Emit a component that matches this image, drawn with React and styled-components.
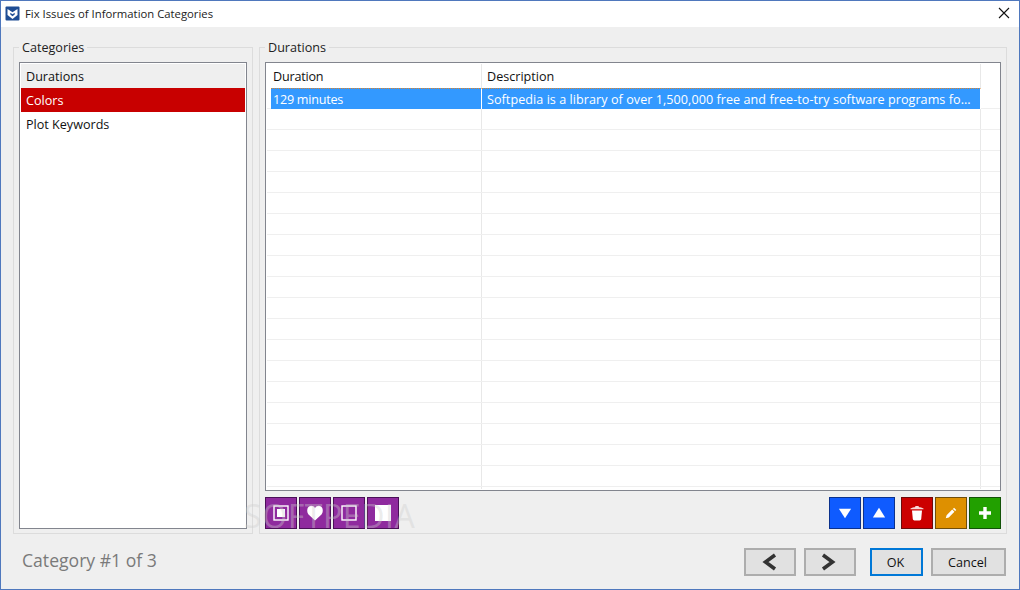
import React from "react";
import styled, { createGlobalStyle } from "styled-components";

const Global = createGlobalStyle`
  html, body { margin: 0; padding: 0; background: #efefef; }
  body { font-family: "Open Sans", "Noto Sans", "Liberation Sans", sans-serif; font-size: 12.6px; color: #111; }
  * { box-sizing: border-box; }
`;

const Win = styled.div`
  position: relative;
  width: 1020px;
  height: 590px;
  border: 1px solid #4f78bd;
  background: #efefef;
  display: flex;
  flex-direction: column;
  overflow: hidden;
`;

const TitleBar = styled.div`
  height: 26px;
  flex: none;
  background: #fff;
  display: flex;
  align-items: center;
  padding: 0 9px 2px 4px;
  gap: 5px;
`;

const TitleText = styled.div`
  flex: 1;
  font-size: 11.3px;
  color: #222;
`;

const Main = styled.div`
  flex: 1;
  display: flex;
  gap: 6px;
  padding: 11px 12px 0;
  min-height: 0;
`;

const Group = styled.fieldset`
  margin: 0;
  padding: 6px 5px 4px;
  border: 1px solid #dcdcdc;
  min-width: 0;
  width: ${(p) => p.$width}px;
  flex: none;
  display: flex;
  flex-direction: column;
  gap: 6px;
`;

const Legend = styled.legend`
  padding: 2px 3px 0;
  font-size: 12.6px;
  line-height: 16px;
  color: #222;
`;

const ListBox = styled.div`
  flex: 1;
  background: #fff;
  border: 1px solid #82858e;
  padding: 1px;
`;

const ListItem = styled.div`
  height: 24px;
  line-height: 26px;
  padding-left: 5px;
  background: ${(p) => (p.$selected ? "#c80000" : p.$hover ? "#efefef" : "transparent")};
  color: ${(p) => (p.$selected ? "#fff" : "#111")};
`;

const TableBox = styled.div`
  flex: 1;
  min-height: 0;
  background: #fff;
  border: 1px solid #82858e;
  padding: 1px 0 0 1px;
  overflow: hidden;
`;

const HeadRow = styled.div`
  display: flex;
  height: 24px;
`;

const Row = styled.div`
  display: flex;
  height: ${(p) => p.$height || 21}px;
  border-bottom: ${(p) => (p.$height ? "none" : "1px solid #efefef")};
`;

const Gutter = styled.div`
  width: 4px;
  flex: none;
`;

const Cell = styled.div`
  width: ${(p) => p.$width}px;
  flex: ${(p) => (p.$width ? "none" : "1")};
  padding-left: ${(p) => p.$pad}px;
  border-right: ${(p) => (p.$last ? "none" : "1px solid #e8e8e8")};
  white-space: nowrap;
  overflow: hidden;
  line-height: ${(p) => p.$line}px;
  letter-spacing: ${(p) => p.$track || 0}px;
`;

const SelectedCell = styled(Cell)`
  background: #3399ff;
  color: #fff;
  border-top: 1px dotted #d9822b;
  border-right: 1px solid #fff;
  margin-bottom: -1px;
  line-height: 22px;
`;

const Toolbar = styled.div`
  display: flex;
  justify-content: space-between;
  flex: none;
`;

const ToolGroup = styled.div`
  display: flex;
  gap: ${(p) => p.$gap || 2}px;
`;

const palette = {
  purple: ["#8f2a9e", "#4b1058"],
  blue: ["#0f5bff", "#0b318c"],
  red: ["#cc0000", "#6e0a0a"],
  orange: ["#de9000", "#6f4d0a"],
  green: ["#22a000", "#125208"],
};

const ToolButton = styled.button`
  width: 32px;
  height: 32px;
  padding: 0;
  display: flex;
  align-items: center;
  justify-content: center;
  background: ${(p) => palette[p.$color][0]};
  border: 1px solid ${(p) => palette[p.$color][1]};
`;

const Footer = styled.div`
  height: 55px;
  flex: none;
  display: flex;
  align-items: flex-start;
  padding: 14px 13px 0 21px;
`;

const Counter = styled.div`
  flex: 1;
  font-size: 17.6px;
  line-height: 24px;
  color: #7a7a7a;
`;

const FootButton = styled.button`
  width: ${(p) => p.$width}px;
  height: 28px;
  margin-left: ${(p) => p.$left}px;
  padding: 0 2px 0 0;
  display: flex;
  align-items: center;
  justify-content: center;
  font: inherit;
  font-size: 12.6px;
  color: #111;
  background: #e1e1e1;
  border: ${(p) => (p.$primary ? "2px solid #0078d7" : "2px solid #adadad")};
`;

const Watermark = styled.div`
  position: absolute;
  left: 243px;
  top: 495px;
  font-size: 32px;
  letter-spacing: 0.6px;
  line-height: 40px;
  color: rgba(205, 205, 205, 0.4);
  pointer-events: none;
`;

function AppLogo() {
  return (
    <svg width="15" height="15" viewBox="0 0 15 15">
      <rect x="0.5" y="0.5" width="14" height="14" rx="1" fill="#1f4d94" />
      <path d="M2.5 3l5 3.2 5-3.2v6l-5 4-5-4z" fill="#fff" />
      <path d="M5.3 6.8l2.2 1.4 2.2-1.4v1.6L7.5 10.2 5.3 8.4z" fill="#1f4d94" />
    </svg>
  );
}

const CloseIcon = () => (
  <svg width="12" height="12" viewBox="0 0 12 12">
    <path d="M1 1l10 10M11 1L1 11" stroke="#111" strokeWidth="1.1" fill="none" />
  </svg>
);

const glyphs = {
  inner: (
    <>
      <rect x="1" y="1" width="14" height="14" fill="none" stroke="#fff" strokeWidth="1.4" />
      <rect x="4" y="4" width="8" height="8" fill="#fff" />
    </>
  ),
  heart: <path d="M8 15.5L1.5 9.5C-.2 7.5-.2 3.5 1.5 2 3.5 0 6.5.5 8 3 9.5.5 12.5 0 14.5 2c1.7 1.5 1.7 5.5 0 7.5z" fill="#fff" />,
  outline: <rect x="1" y="1" width="14" height="14" fill="none" stroke="#fff" strokeWidth="1.4" />,
  solid: <rect x="0" y="0" width="16" height="16" fill="#fff" />,
  down: <path d="M1 3h14L8 14z" fill="#fff" />,
  up: <path d="M1 13h14L8 2z" fill="#fff" />,
  trash: (
    <>
      <path d="M1.5 3.6C3 2.6 5 2.4 6 2.3L6.5 1h3l.5 1.3c1 .1 3 .3 4.5 1.3v.6h-13z" fill="#fff" opacity=".85" />
      <path d="M3 5.5h10l-.8 8.6c-.1.8-.8 1.4-1.6 1.4H5.4c-.8 0-1.5-.6-1.6-1.4z" fill="#fff" />
    </>
  ),
  pencil: <path d="M11.5 2l2.5 2.5-1.3 1.3-2.5-2.5zM9.4 4.1l2.5 2.5-6.4 6.4L2 14l1-3.5z" fill="#fff" />,
  plus: <path d="M6.3 2h3.4v4.3H14v3.4H9.7V14H6.3V9.7H2V6.3h4.3z" fill="#fff" />,
};

const Glyph = ({ name, size = 16 }) => (
  <svg width={size} height={size} viewBox="0 0 16 16">
    {glyphs[name]}
  </svg>
);

const Chevron = ({ left }) => (
  <svg width="16" height="18" viewBox="0 0 16 18">
    <path d={left ? "M14 2L4.5 9l9.5 7" : "M2 2l9.5 7L2 16"} fill="none" stroke="#333" strokeWidth="3.6" />
  </svg>
);

const emptyRows = Array.from({ length: 18 });

export default function App() {
  return (
    <>
      <Global />
      <Win>
        <TitleBar>
          <AppLogo />
          <TitleText>Fix Issues of Information Categories</TitleText>
          <CloseIcon />
        </TitleBar>
        <Main>
          <Group $width={240}>
            <Legend>Categories</Legend>
            <ListBox>
              <ListItem $hover>Durations</ListItem>
              <ListItem $selected>Colors</ListItem>
              <ListItem>Plot Keywords</ListItem>
            </ListBox>
          </Group>
          <Group $width={748}>
            <Legend>Durations</Legend>
            <TableBox>
              <HeadRow>
                <Gutter />
                <Cell $width={211} $pad={2} $line={26} $track={-0.2}>Duration</Cell>
                <Cell $width={499} $pad={5} $line={26}>Description</Cell>
                <Cell $last />
              </HeadRow>
              <Row>
                <Gutter />
                <SelectedCell $width={211} $pad={2} $track={-0.25}>129 minutes</SelectedCell>
                <SelectedCell $width={499} $pad={5} $track={0.05}>
                  Softpedia is a library of over 1,500,000 free and free-to-try software programs fo...
                </SelectedCell>
                <Cell $last />
              </Row>
              {emptyRows.map((_, i) => (
                <Row key={i}>
                  <Gutter />
                  <Cell $width={211} />
                  <Cell $width={499} />
                  <Cell $last />
                </Row>
              ))}
              <Row $height={2}>
                <Gutter />
                <Cell $width={211} />
                <Cell $width={499} />
                <Cell $last />
              </Row>
            </TableBox>
            <Toolbar>
              <ToolGroup>
                <ToolButton $color="purple"><Glyph name="inner" /></ToolButton>
                <ToolButton $color="purple"><Glyph name="heart" /></ToolButton>
                <ToolButton $color="purple"><Glyph name="outline" /></ToolButton>
                <ToolButton $color="purple"><Glyph name="solid" /></ToolButton>
              </ToolGroup>
              <ToolGroup $gap={6}>
                <ToolGroup>
                  <ToolButton $color="blue"><Glyph name="down" size={14} /></ToolButton>
                  <ToolButton $color="blue"><Glyph name="up" size={14} /></ToolButton>
                </ToolGroup>
                <ToolGroup>
                  <ToolButton $color="red"><Glyph name="trash" /></ToolButton>
                  <ToolButton $color="orange"><Glyph name="pencil" size={14} /></ToolButton>
                  <ToolButton $color="green"><Glyph name="plus" /></ToolButton>
                </ToolGroup>
              </ToolGroup>
            </Toolbar>
          </Group>
        </Main>
        <Footer>
          <Counter>Category #1 of 3</Counter>
          <FootButton $width={52}><Chevron left /></FootButton>
          <FootButton $width={52} $left={8}><Chevron /></FootButton>
          <FootButton $width={53} $left={14} $primary>OK</FootButton>
          <FootButton $width={75} $left={8}>Cancel</FootButton>
        </Footer>
        <Watermark>SOFTPEDIA</Watermark>
      </Win>
    </>
  );
}
